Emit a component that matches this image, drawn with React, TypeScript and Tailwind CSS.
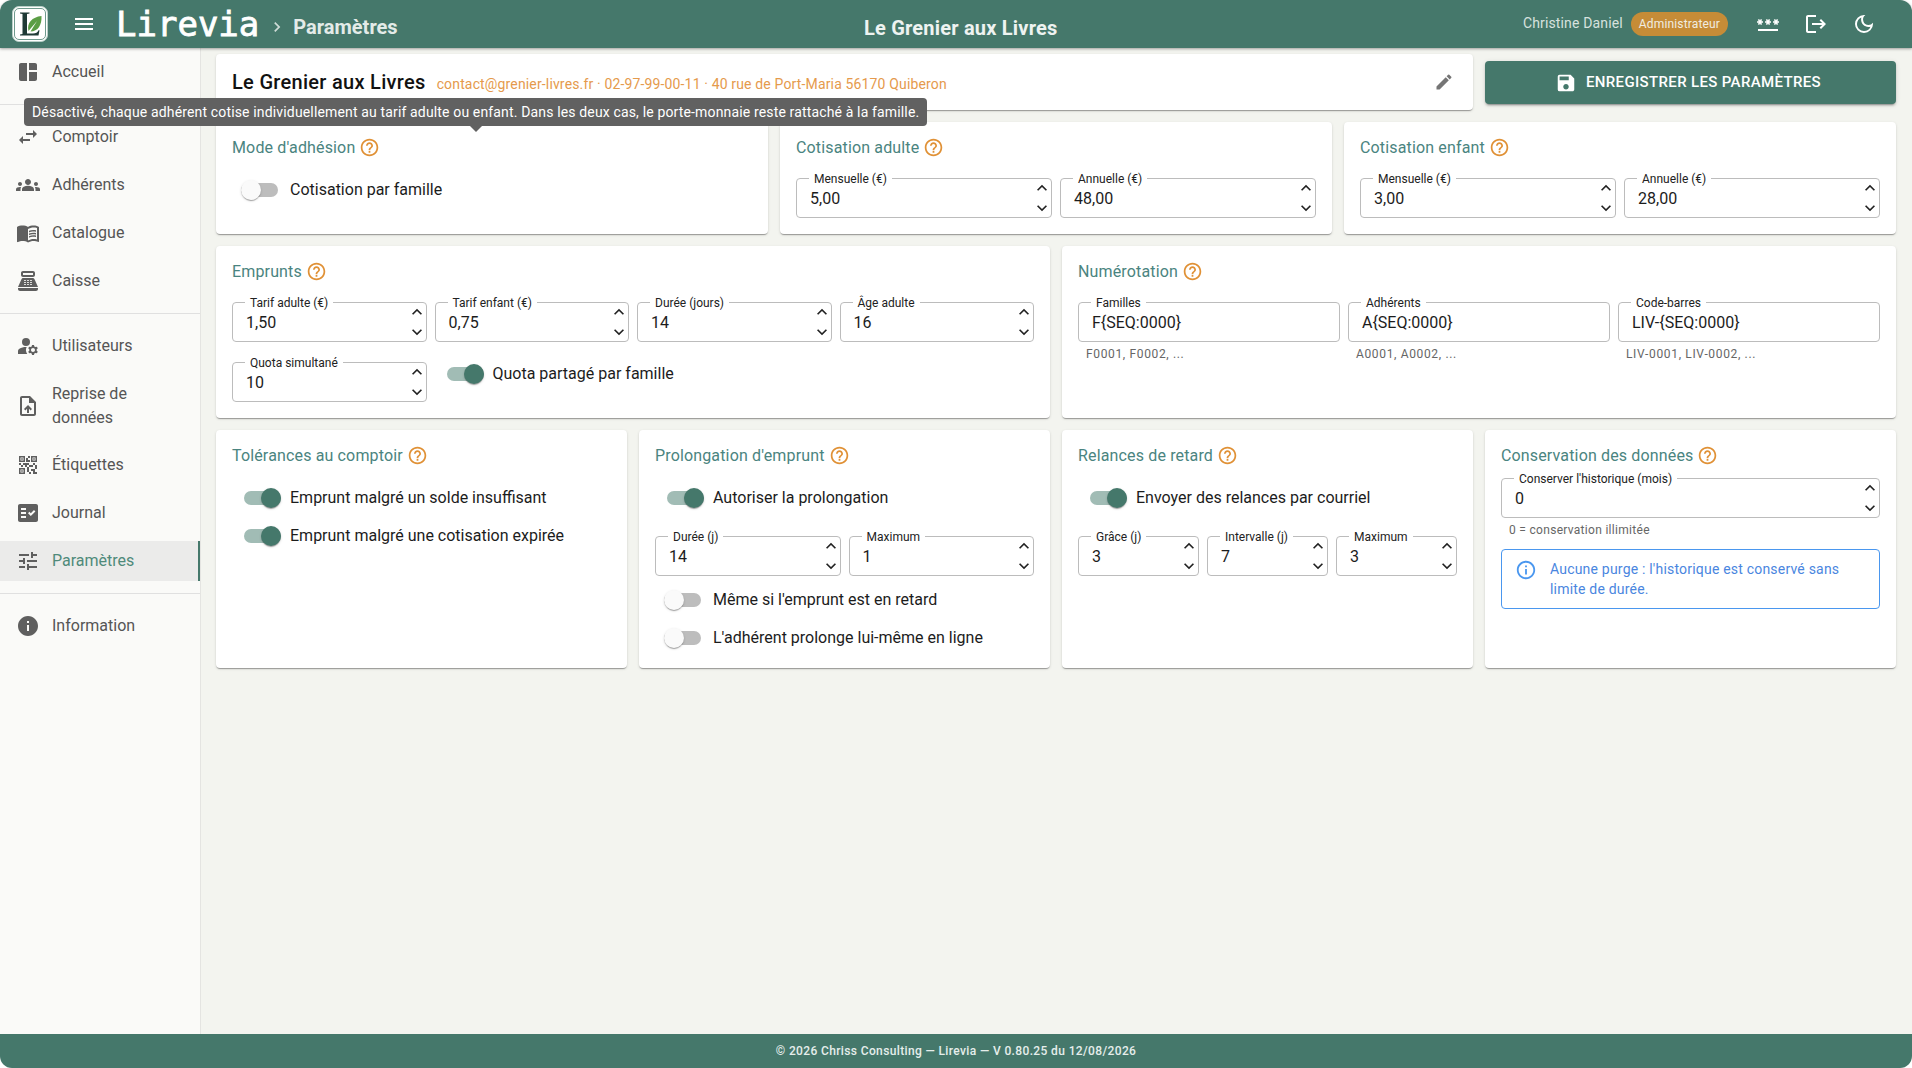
import React from 'react';
import {
  MdSpaceDashboard,
  MdSwapHoriz,
  MdGroups,
  MdMenuBook,
  MdPointOfSale,
  MdManageAccounts,
  MdOutlineUploadFile,
  MdQrCode2,
  MdFactCheck,
  MdTune,
  MdInfo,
  MdHelpOutline,
  MdEdit,
  MdSave,
  MdLogout,
  MdOutlineDarkMode,
  MdMenu,
  MdPassword,
  MdInfoOutline,
  MdKeyboardArrowUp,
  MdKeyboardArrowDown,
  MdChevronRight,
} from 'react-icons/md';

const Logo = () => (
  <div className="w-[36px] h-[36px] rounded-[7px] bg-white border border-[#b9d0c8] p-[1px] shrink-0">
    <div className="w-full h-full rounded-[5px] border border-[#6f9a8d] bg-white flex items-center justify-center">
      <svg viewBox="0 0 30 30" className="w-[30px] h-[30px]">
        <path d="M5 3.500h9.500v1l-2.500.6v19.400h6c3 0 4.500-1 5.500-3.200h1l-1 5.200H5v-1l2.500-.6V5.100L5 4.500z" fill="#1f3a36" />
        <path d="M13.500 22C11.500 14 17 8 26.500 7c.5 9-3.500 15.500-11 15.500L22 12z" fill="#5b9e45" />
      </svg>
    </div>
  </div>
);

const NavItem = ({ icon, label, active, className = '' }: { icon: React.ReactNode; label: React.ReactNode; active?: boolean; className?: string }) => (
  <div className={`flex items-center pl-[16px] min-h-[40px] py-[8px] relative ${active ? 'bg-[#ebebea] text-[#4f8a7a]' : 'text-[#555]'} ${className}`}>
    <span className="w-[24px] h-[24px] flex items-center justify-center text-[#5f5f5f] text-[24px] mr-[12px] shrink-0">{icon}</span>
    <span className="text-[16px] leading-[24px] pr-[16px]">{label}</span>
    {active && <span className="absolute right-0 top-0 bottom-0 w-[2px] bg-[#45786b]" />}
  </div>
);

const Title = ({ children }: { children: React.ReactNode }) => (
  <div className="flex items-center gap-[4px] h-[24px] text-[16px] tracking-[0.15px] text-[#4a8480]">
    <span>{children}</span>
    <MdHelpOutline className="text-[#e09136] text-[21px] -mt-[2px]" />
  </div>
);

const Toggle = ({ on, label, className = '' }: { on?: boolean; label: string; className?: string }) => (
  <div className={`flex items-center h-[38px] ${className}`}>
    <div className={`relative w-[37px] h-[20px] flex items-center ${on ? 'ml-[12px] mr-[9px]' : 'ml-[9px] mr-[12px]'}`}>
      <div className={`w-full h-[14px] rounded-full ${on ? 'bg-[#a1bcb5]' : 'bg-[#bdbdbd]'}`} />
      <div
        className={`absolute top-0 w-[20px] h-[20px] rounded-full shadow-[0_2px_1px_-1px_rgba(0,0,0,0.2),0_1px_1px_0_rgba(0,0,0,0.14),0_1px_3px_0_rgba(0,0,0,0.12)] ${
          on ? 'right-0 bg-[#45786b]' : 'left-0 bg-[#fafafa]'
        }`}
      />
    </div>
    <span className="text-[16px] leading-[24px] text-[#1c1c1c]">{label}</span>
  </div>
);

const Field = ({ label, value, spin = true, className = '' }: { label: string; value: string; spin?: boolean; className?: string }) => (
  <div className={`relative h-[40px] rounded-[4px] border border-[#bcbcbc] bg-white flex items-center pl-[13px] min-w-0 ${className}`}>
    <span className="absolute -top-[7px] left-[12px] bg-white px-[5px] text-[12px] leading-[14px] text-[#222] whitespace-nowrap">{label}</span>
    <span className="flex-1 text-[16px] text-[#1c1c1c] pt-[1px]">{value}</span>
    {spin && (
      <div className="flex flex-col text-[#222] text-[20px] -mr-[1px]">
        <MdKeyboardArrowUp />
        <MdKeyboardArrowDown />
      </div>
    )}
  </div>
);

const Card = ({ children, className = '' }: { children: React.ReactNode; className?: string }) => (
  <div
    className={`bg-white rounded-[4px] shadow-[0_2px_1px_-1px_rgba(0,0,0,0.2),0_1px_1px_0_rgba(0,0,0,0.14),0_1px_3px_0_rgba(0,0,0,0.12)] px-[16px] pt-[14px] ${className}`}
  >
    {children}
  </div>
);

const Hint = ({ children, wide }: { children: React.ReactNode; wide?: boolean }) => (
  <div className={`text-[12px] leading-[14px] text-[#666] pl-[8px] mt-[5px] ${wide ? 'tracking-[0.65px]' : 'tracking-[0.3px]'}`}>{children}</div>
);

export default function App() {
  return (
    <div className="w-[1912px] h-[1068px] flex flex-col bg-white font-['Roboto',sans-serif] overflow-hidden relative">
      {/* Barre du haut */}
      <header className="h-[48px] shrink-0 bg-[#45786b] rounded-t-[12px] shadow-[0_1px_3px_rgba(0,0,0,0.35)] z-10 flex items-center pl-[12px] pr-[36px] text-white relative">
        <Logo />
        <MdMenu className="text-[24px] ml-[24px]" />
        <span className="font-['DejaVu_Sans_Mono',monospace] text-[34px] leading-[48px] ml-[20px] [-webkit-text-stroke:0.8px_white]">Lirevia</span>
        <MdChevronRight className="text-[20px] text-[#cfdcd8] ml-[8px] mt-[5px]" />
        <span className="text-[20px] font-bold text-[#e3ebe8] ml-[6px] pt-[5px]">Paramètres</span>
        <span className="absolute left-[864px] text-[20px] font-bold tracking-[0.2px] text-[#eef3f1] pt-[8px]">Le Grenier aux Livres</span>
        <div className="ml-auto flex items-center">
          <span className="text-[14px] tracking-[0.15px] text-[#d7e2de] pb-[2px]">Christine Daniel</span>
          <span className="ml-[8px] h-[24px] px-[8px] rounded-full bg-[#c68c37] text-[12px] tracking-[0.15px] leading-[24px] text-[#f1ece0]">Administrateur</span>
          <MdPassword className="text-[24px] ml-[28px]" />
          <MdLogout className="text-[24px] ml-[24px]" />
          <MdOutlineDarkMode className="text-[24px] ml-[24px]" />
        </div>
      </header>

      <div className="flex-1 flex min-h-0 bg-[#f3f4ef]">
        {/* Menu latéral */}
        <aside className="w-[201px] shrink-0 bg-[#fafaf8] border-r border-[#e4e4e1] flex flex-col pt-[4px]">
          <NavItem icon={<MdSpaceDashboard />} label="Accueil" />
          <div className="border-t border-[#e0e0e0] my-[12px]" />
          <div className="flex flex-col gap-[8px]">
            <NavItem icon={<MdSwapHoriz />} label="Comptoir" />
            <NavItem icon={<MdGroups />} label="Adhérents" />
            <NavItem icon={<MdMenuBook />} label="Catalogue" />
            <NavItem icon={<MdPointOfSale />} label="Caisse" />
          </div>
          <div className="border-t border-[#e0e0e0] my-[12px]" />
          <div className="flex flex-col gap-[8px]">
            <NavItem icon={<MdManageAccounts />} label="Utilisateurs" />
            <NavItem icon={<MdOutlineUploadFile />} label={<>Reprise de<br />données</>} className="-mb-[1px]" />
            <NavItem icon={<MdQrCode2 />} label="Étiquettes" />
            <NavItem icon={<MdFactCheck />} label="Journal" />
            <NavItem active icon={<MdTune />} label="Paramètres" />
          </div>
          <div className="border-t border-[#e0e0e0] my-[12px]" />
          <NavItem icon={<MdInfo />} label="Information" />
        </aside>

        {/* Contenu */}
        <main className="flex-1 min-w-0 pl-[15px] pr-[16px] pt-[6px] flex flex-col relative">
          <div className="flex items-start gap-[12px]">
            <div className="flex-1 h-[56px] bg-white rounded-[4px] shadow-[0_2px_1px_-1px_rgba(0,0,0,0.2),0_1px_1px_0_rgba(0,0,0,0.14),0_1px_3px_0_rgba(0,0,0,0.12)] pl-[16px] pr-[19px] flex items-center">
              <span className="text-[20px] font-medium tracking-[0.3px] text-[#111]">Le Grenier aux Livres</span>
              <span className="text-[14px] tracking-[0.15px] text-[#e59a4c] ml-[11px] pt-[4px]">contact@grenier-livres.fr · 02-97-99-00-11 · 40 rue de Port-Maria 56170 Quiberon</span>
              <MdEdit className="ml-auto text-[20px] text-[#757575]" />
            </div>
            <button className="w-[411px] h-[43px] mt-[7px] pr-[5px] rounded-[4px] bg-[#45786b] text-white text-[15px] font-medium tracking-[0.35px] flex items-center justify-center gap-[9px] shadow-[0_3px_1px_-2px_rgba(0,0,0,0.2),0_2px_2px_0_rgba(0,0,0,0.14),0_1px_5px_0_rgba(0,0,0,0.12)]">
              <MdSave className="text-[22px]" />
              ENREGISTRER LES PARAMÈTRES
            </button>
          </div>

          <div className="grid grid-cols-3 gap-[12px] mt-[12px]">
            <Card className="h-[112px]">
              <Title>Mode d'adhésion</Title>
              <Toggle label="Cotisation par famille" className="mt-[11px]" />
            </Card>
            <Card className="h-[112px]">
              <Title>Cotisation adulte</Title>
              <div className="grid grid-cols-2 gap-[8px] mt-[18px]">
                <Field label="Mensuelle (€)" value="5,00" />
                <Field label="Annuelle (€)" value="48,00" />
              </div>
            </Card>
            <Card className="h-[112px]">
              <Title>Cotisation enfant</Title>
              <div className="grid grid-cols-2 gap-[8px] mt-[18px]">
                <Field label="Mensuelle (€)" value="3,00" />
                <Field label="Annuelle (€)" value="28,00" />
              </div>
            </Card>
          </div>

          <div className="grid grid-cols-2 gap-[12px] mt-[12px]">
            <Card className="h-[172px]">
              <Title>Emprunts</Title>
              <div className="grid grid-cols-4 gap-[8px] mt-[18px]">
                <Field label="Tarif adulte (€)" value="1,50" />
                <Field label="Tarif enfant (€)" value="0,75" />
                <Field label="Durée (jours)" value="14" />
                <Field label="Âge adulte" value="16" />
              </div>
              <div className="grid grid-cols-4 gap-[8px] mt-[20px]">
                <Field label="Quota simultané" value="10" />
                <div className="col-span-3 -mt-[7px]">
                  <Toggle on label="Quota partagé par famille" />
                </div>
              </div>
            </Card>
            <Card className="h-[172px]">
              <Title>Numérotation</Title>
              <div className="grid grid-cols-3 gap-[8px] mt-[18px]">
                <div>
                  <Field label="Familles" value="F{SEQ:0000}" spin={false} />
                  <Hint wide>F0001, F0002, ...</Hint>
                </div>
                <div>
                  <Field label="Adhérents" value="A{SEQ:0000}" spin={false} />
                  <Hint wide>A0001, A0002, ...</Hint>
                </div>
                <div>
                  <Field label="Code-barres" value="LIV-{SEQ:0000}" spin={false} />
                  <Hint wide>LIV-0001, LIV-0002, ...</Hint>
                </div>
              </div>
            </Card>
          </div>

          <div className="grid grid-cols-4 gap-[12px] mt-[12px]">
            <Card className="h-[238px]">
              <Title>Tolérances au comptoir</Title>
              <div className="mt-[11px]">
                <Toggle on label="Emprunt malgré un solde insuffisant" />
                <Toggle on label="Emprunt malgré une cotisation expirée" />
              </div>
            </Card>
            <Card className="h-[238px]">
              <Title>Prolongation d'emprunt</Title>
              <Toggle on label="Autoriser la prolongation" className="mt-[11px]" />
              <div className="grid grid-cols-2 gap-[8px] mt-[19px]">
                <Field label="Durée (j)" value="14" />
                <Field label="Maximum" value="1" />
              </div>
              <Toggle label="Même si l'emprunt est en retard" className="mt-[5px]" />
              <Toggle label="L'adhérent prolonge lui-même en ligne" />
            </Card>
            <Card className="h-[238px]">
              <Title>Relances de retard</Title>
              <Toggle on label="Envoyer des relances par courriel" className="mt-[11px]" />
              <div className="grid grid-cols-3 gap-[8px] mt-[19px]">
                <Field label="Grâce (j)" value="3" />
                <Field label="Intervalle (j)" value="7" />
                <Field label="Maximum" value="3" />
              </div>
            </Card>
            <Card className="h-[238px]">
              <Title>Conservation des données</Title>
              <Field label="Conserver l'historique (mois)" value="0" className="mt-[10px]" />
              <Hint>0 = conservation illimitée</Hint>
              <div className="mt-[12px] h-[60px] rounded-[4px] border border-[#4a97ef] px-[13px] py-[5px] flex gap-[13px]">
                <MdInfoOutline className="text-[22px] text-[#4a97ef] shrink-0 mt-[4px]" />
                <span className="text-[14px] tracking-[0.2px] leading-[20px] text-[#4a86e0] pt-[4px]">Aucune purge : l'historique est conservé sans limite de durée.</span>
              </div>
            </Card>
          </div>
        </main>
      </div>

      <footer className="h-[34px] shrink-0 bg-[#45786b] rounded-b-[12px] flex items-center justify-center text-[12px] tracking-[0.37px] font-medium text-[#e6eeeb]">
        © 2026 Chriss Consulting — Lirevia — V 0.80.25 du 12/08/2026
      </footer>

      {/* Infobulle au survol */}
      <div className="absolute left-[24px] top-[98px] h-[28px] z-20 rounded-[4px] bg-[#616161] text-white text-[14px] tracking-[0.15px] leading-[28px] px-[8px] whitespace-nowrap">
        Désactivé, chaque adhérent cotise individuellement au tarif adulte ou enfant. Dans les deux cas, le porte-monnaie reste rattaché à la famille.
        <span className="absolute left-[446px] -bottom-[6px] w-0 h-0 border-x-[6px] border-x-transparent border-t-[6px] border-t-[#616161]" />
      </div>
    </div>
  );
}
